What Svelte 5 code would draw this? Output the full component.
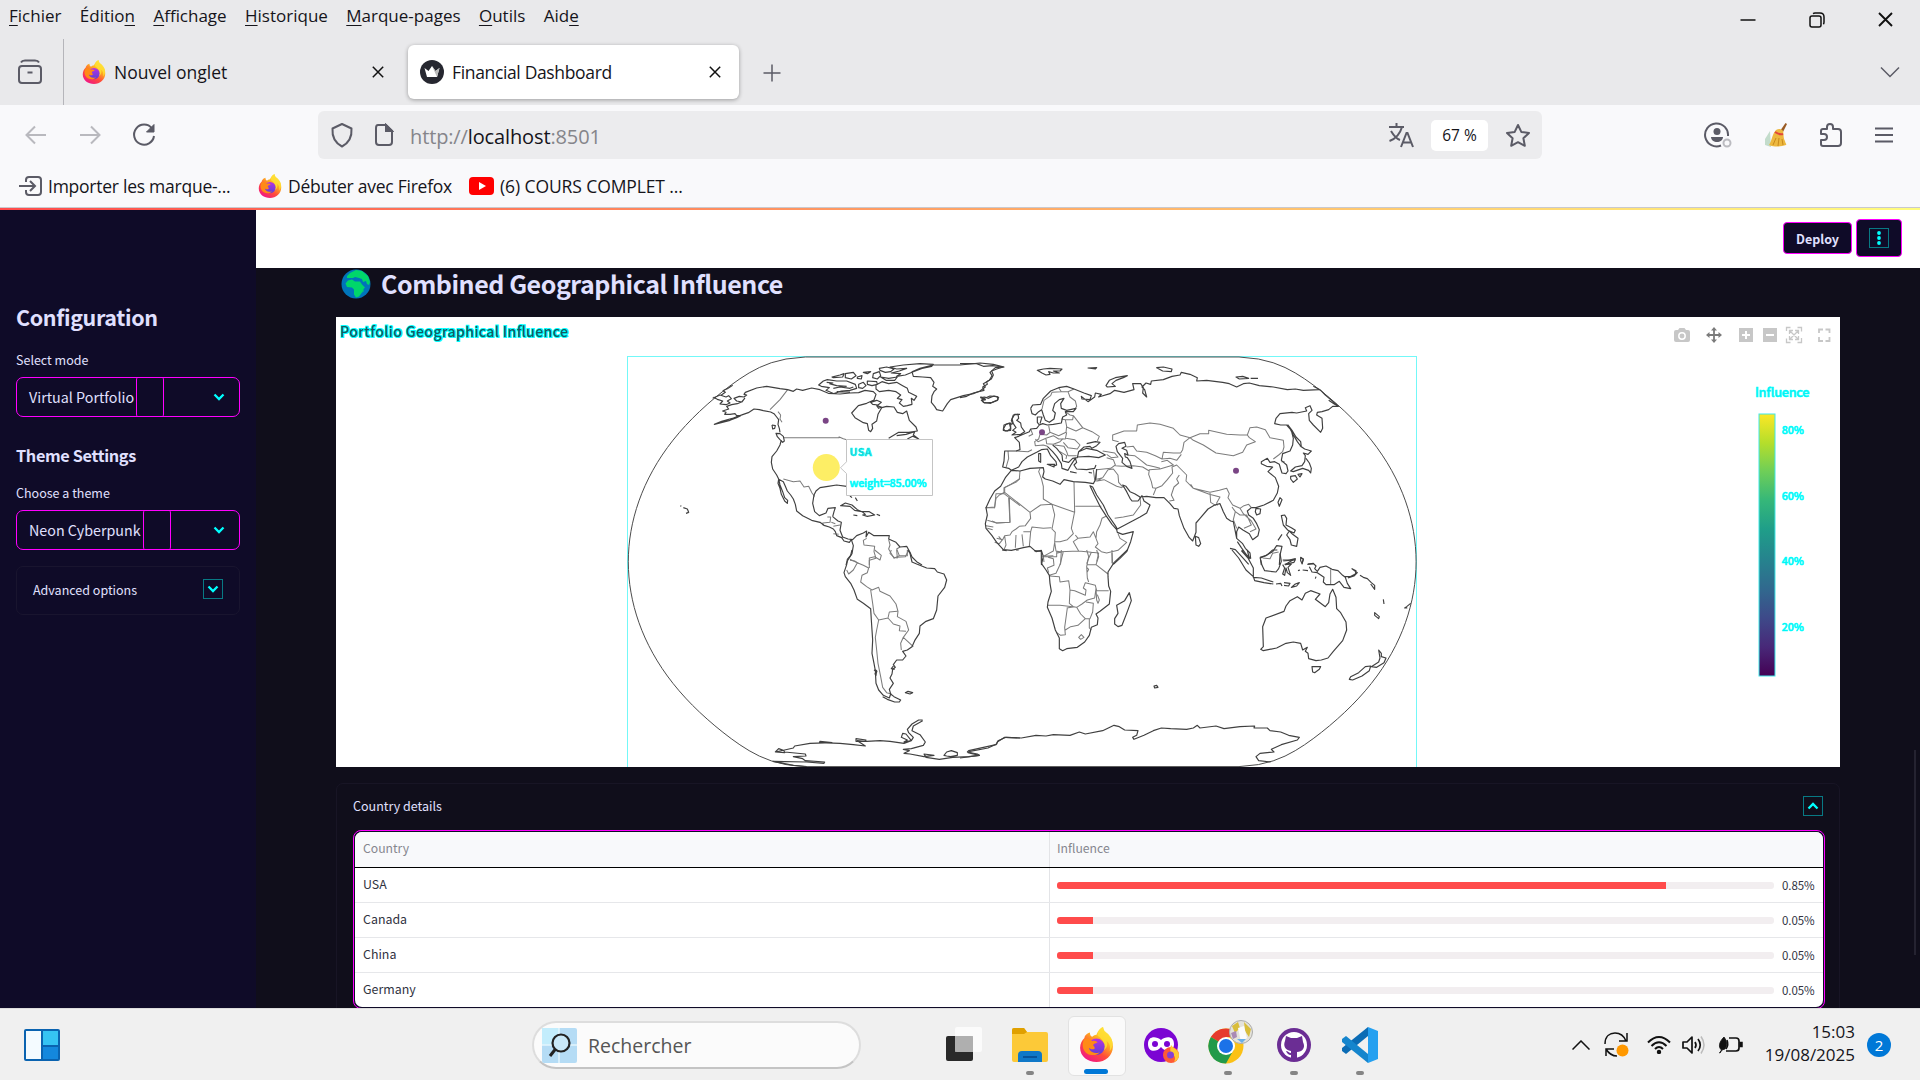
<script>
  const menus = [
    ['', 'F', 'ichier'], ['Éditio', 'n', ''], ['', 'A', 'ffichage'], ['', 'H', 'istorique'],
    ['', 'M', 'arque-pages'], ['', 'O', 'utils'], ['Aid', 'e', '']
  ];
  const rows = [
    { name: 'USA', fill: 85, label: '0.85%' },
    { name: 'Canada', fill: 5, label: '0.05%' },
    { name: 'China', fill: 5, label: '0.05%' },
    { name: 'Germany', fill: 5, label: '0.05%' }
  ];
  const ticks = [[434.3, '80%'], [500, '60%'], [565.3, '40%'], [631, '20%']];

  // Sphere outline in the Natural Earth projection, centred on the plot.
  const project = (lon, lat) => {
    const p2 = lat * lat;
    const p4 = p2 * p2;
    const x = lon * (0.8707 - 0.131979 * p2 + p4 * (-0.013791 + p4 * (0.003971 * p2 - 0.001529 * p4)));
    const y = lat * (1.007226 + p2 * (0.015085 + p4 * (-0.044475 + 0.028874 * p2 - 0.005916 * p4)));
    return `${(1022.2 + 144 * x).toFixed(2)},${(561.8 - 144 * y).toFixed(2)}`;
  };
  const sphere = [];
  for (let d = -90; d <= 90; d += 3) sphere.push(project(-Math.PI, (d * Math.PI) / 180));
  for (let d = 90; d >= -90; d -= 3) sphere.push(project(Math.PI, (d * Math.PI) / 180));
  const outline = sphere.join(' ');

  const coast = {
    northWest: `M338 121L322 131 308 137M278 160L300 150 318 156 326 152 334 161 322 168 330 174 318 179 300 177 308 168 292 163 280 157
      M309 137L316 142 304 150
      M503 134L480 131 440 124 410 129 376 142 372 148 380 150 372 156 358 154 342 160 350 168 366 171 374 160 366 170 352 176 335 179 320 184 326 192 308 198 318 202 314 208 330 208 345 206 350 212 362 212 350 218 330 226 283 238 305 229 340 219 370 208 385 203 402 192 418 194 430 197 452 201 462 206 470 216 476 224 474 238 478 250 480 262
      M456 240L466 242 464 250 458 252 456 240M468 265L480 266 490 274 493 288 488 292 480 284 472 275Z
      M484 285L480 300 470 318 456 335 454 352 458 372 470 390 476 402 480 420 488 440 494 458 503 466 502 475 494 468 484 448 480 430 474 415 476 403 490 410 496 424 502 438 512 450 520 462 526 478 530 498 548 512 575 526 600 532 612 541 628 546 640 552 646 560 650 572 665 578 672 588 688 592 694 584
      M503 134L520 139 530 132 548 136 575 129 600 134 625 145 660 147 690 144 716 143 735 136 760 140 768 148 762 165 740 175 715 182 695 204 705 218 730 233 742 236 746 256 752 260 758 250 756 238 770 228 774 208 785 188 800 184 822 186 832 202 848 206 860 198 868 226 888 246 892 258 866 262 836 262 806 280M830 272L858 268 884 260 880 270 896 282 878 274 862 282
      M596 120L610 108 622 104 650 108 680 108 706 118 710 130 690 136 664 138 642 146 618 136 628 128 604 124ZM628 116L650 122 680 124M640 130L660 126 690 130 700 126M620 112L640 114M650 140L690 141M636 96L660 90 672 86 668 96 640 98ZM676 86L700 82 708 92 694 102 676 98ZM712 96L726 92 724 102 712 100ZM730 82L752 80 742 86ZM716 118L730 112 738 122 728 130 716 128ZM742 108L770 110 772 118 756 122 742 118ZM760 86L778 80 782 92 772 102 758 98ZM778 70L800 66 822 72 812 80 796 82 780 76ZM782 96L806 100 832 96 824 106 798 106ZM810 66L850 60 900 56 940 58 935 64 906 70 880 80 856 90 830 94 842 86 814 84 838 78 860 70 830 72Z
      M768 120L786 110 806 116 830 112 848 122 862 130 866 142 890 154 882 166 874 160 876 178 862 182 850 184 838 174 846 164 832 160 842 150 828 140 806 136 778 140 768 132ZM752 172L770 166 784 172 774 180 758 178ZM770 182L784 186 776 190Z
      M938 60L900 70 876 80 880 94 908 96 932 98 942 112 938 124 950 132 942 140 936 152 934 172 944 184 950 194 968 198 982 176 992 164 1030 152 1060 146 1080 138 1096 126 1090 116 1108 106 1116 92 1110 82 1126 68 1152 66 1120 58 1080 54 1020 60 980 60Z
      M1082 158L1094 156 1104 160 1122 153 1136 157 1132 166 1116 172 1094 174 1084 166 1096 164Z
      M582 450L578 475 584 500 598 512 618 504 624 490 646 488 642 500 638 515M582 450L588 438 600 428 624 424 650 420 680 424M690 453L696 458M706 458L712 468M662 482L676 474 696 480 712 494 726 500 704 496 690 484ZM700 510L712 512M726 500L748 500 764 510 742 514 728 510 736 508ZM770 508L780 512
      M638 515L654 528 664 532 660 556 668 576 684 582 698 584 710 572 730 564 740 558 738 576 746 562 762 572 792 572 808 572 806 582 828 592 840 606 860 604 870 622 876 636 890 650 906 660M694 584L700 602 696 626 682 648 678 660
      M181 482L184 484M190 488L202 492 206 502 198 505M1200 208L1184 208 1174 226 1178 236 1172 238M1168 234L1152 240 1150 256 1162 258 1172 250Z`,
    northEast: `M0 56L50 56 70 64 98 62 130 66 110 72 95 78 100 90 94 102 80 110 82 118 68 126 72 136 40 144 20 154 0 158
      M62 156L74 160 90 153 112 155 114 164 92 175 70 172 66 164 76 164Z
      M232 76L250 72 270 70 306 72 300 78 280 78 298 84 280 84 266 80 270 88 258 90 246 84ZM384 69L410 68 406 72ZM438 122L448 106 466 98 502 92 490 98 468 106 456 116 466 124 442 126ZM590 68L610 66 636 72 634 80 608 78ZM828 96L848 94 866 100 838 102ZM872 100L894 100
      M212 190L216 206 226 210 236 200 245 194 250 210 256 226 268 232 282 222 286 204 278 196 284 176 298 164 312 160 302 176 304 190 320 196 348 190 340 200 316 200 320 210 308 216 304 234 280 238 262 240 248 236 238 240 232 232 232 216 246 216 240 236
      M212 190L218 180 242 178 250 160 272 138 296 128 320 124 342 132 372 144 394 152 390 164 366 162 364 154 384 170 404 156 406 144 424 148 416 156 450 146 464 136 492 142 522 134 518 116 542 116 550 128 548 144 560 156 554 134 546 126 558 114 572 118 574 108 610 104 636 94 660 90 664 82 690 88 712 98 710 108 740 106 788 112 808 116 830 126 850 116 868 114 898 122 940 126 982 134 1006 132 1030 136 1078 134M1060 124L1080 134 1096 150 1136 184 1124 178 1106 166M1134 184L1118 184 1106 194 1086 200 1072 202 1070 210 1086 220 1088 250 1082 262 1060 240 1048 226 1046 206 1056 196 1050 182 1036 188 1040 198 1010 204 996 202 960 206 948 220 944 236 962 240 980 240 994 256 1000 280 998 300 990 318 968 326 964 346 980 360 984 378 978 386 966 384 962 372 958 358 944 350 930 352 922 340 904 350 904 356 920 364 938 366 924 380 946 398 956 424 952 444 940 466 912 480 888 488 874 488
      M888 490L902 492 900 506 890 510 886 500ZM960 458L966 464 958 484 954 472ZM984 240L996 256 1008 276 1022 290 1024 306 1012 290 1000 270ZM1020 302L1034 312 1054 318 1044 328 1030 324 1036 332 1034 350 1026 362 1006 366 992 378 1000 380 1028 370 1046 376 1052 384 1054 370 1048 354 1038 340M992 394L1006 392 1012 402 1000 412 992 402ZM1014 388L1026 386 1020 396Z
      M874 488L862 498 866 510 880 520 890 536 898 554 894 572 878 584 868 566 850 556 836 546 830 560 830 580 848 596 856 610 870 624 872 640 860 630 844 608 832 590M830 580L826 560 820 530 812 528 800 520 790 500 780 476 764 480 744 492 720 520 708 534 708 562 698 588 688 578 672 550 658 512 654 492 642 490 630 476 612 458 588 458 560 454 540 456 524 446 510 440 498 424 488 420 500 440 510 460 516 468 534 468 546 452 552 468 570 480 560 504 540 516 506 534 472 552 466 542 444 510 430 480 410 450 398 426 390 422 402 448 420 484 438 512 456 538 470 554 472 562 488 568 520 560 512 590 500 620 480 640 460 658
      M706 574L716 578 722 596 716 604 708 600ZM810 610L826 614 850 640 866 658M964 512L974 510 980 520 978 540 994 548 1006 556 1002 564 984 556 970 540ZM966 568L954 586M988 558L998 568 1014 580 1010 604 994 600 990 584 980 570ZM900 640L916 632 938 620 950 602 966 604 960 630 958 660M902 645L904 660M970 648L1006 644 1002 652 974 658M1022 638L1030 642 1026 658M1042 658L1062 656
      M156 222L160 210 174 208 176 220 170 226 182 234 184 246 194 260 182 268 156 270 168 262 158 256 168 248 160 236ZM152 234L138 238 130 252 136 258 152 256ZM238 240L230 250 212 252 208 260 190 268 176 274 164 278 178 292 180 314 168 318 134 318 132 348 128 366 146 370 154 376 176 366 186 350 202 336 230 322 244 314 262 312 272 332 288 350 290 360 278 364M262 304L278 320 290 334 304 356 306 370 324 376 334 358 346 340 350 352 342 360 350 372 380 374 404 370 408 360 M236 326L242 326 242 352 236 348ZM262 358L284 358 282 366ZM278 300L290 310 306 330 308 348 326 352 338 340 352 338 356 320 372 306 390 304 396 310 410 302 420 292 406 290 380 296M356 320L380 310 410 316 436 330 416 338 386 334 352 336M330 380L350 384M386 382L396 384
      M476 296L468 304 472 320 488 340 486 352 500 364 516 370 510 350 502 338 496 336 494 326 504 330 500 316 486 310 498 304 494 292Z
      M154 376L180 378 210 370 250 368 252 380 248 396 256 402 278 408 300 418 312 404 340 410 376 412 400 416 406 404 410 372M154 376L136 398 122 424 104 438 90 462 78 488 82 510 76 536 78 550 96 572 110 592 130 614 154 616 190 608 210 604 228 620 244 616 250 634 244 660`,
    southWest: `M696 0L692 16 682 28 680 44 672 68 676 80 692 100 702 120 712 148 730 160 752 176 754 210 756 240 758 270 756 310 762 340 766 362 768 400 776 420 790 436 808 444 812 432 822 440 842 450 838 456 824 456 802 448 788 440
      M764 358L770 362 768 376 764 370M812 432L808 418 820 400 810 384 816 372 818 358 826 352 820 344 830 330 848 330 858 318 848 304 862 300 876 290 884 272 898 250 900 228 918 214 940 206 950 180 954 138 974 112 980 90 972 72 952 66 944 56 920 54 890 42 876 36 870 10 864 0M820 348L814 356 824 358M856 428L864 424 878 428 870 432ZM762 360L772 366
      M908 510L896 510 876 522 862 538 866 548 880 562 874 572 858 552 848 550 844 562 862 570 852 576 874 572 852 580 810 574 780 572 740 574 708 574 708 566 738 570 734 574 712 572 736 588 700 584 660 580 598 578 600 574 636 578 570 580 524 588 520 594 494 600 466 606 476 596 492 602 494 608 466 606M494 606L556 612 558 618 520 620 548 626 556 632 614 636 612 640 560 636 460 634
      M908 512L880 528 876 542 900 554 916 576 910 586 874 596 850 598 868 602 852 610 870 612 912 620 942 616 912 612 918 622 958 628 998 622 1046 620 1078 616 1044 608 1050 604 1104 594 1130 582 1134 572 1158 562 1200 564M972 616L980 606 994 602 1012 608 1012 616 992 620 980 618ZM458 634L490 640 520 646 560 650`,
    southEast: `M244 0L244 40 258 60 268 76 270 100 274 124 264 156 262 172 276 204 286 240 298 264 298 296 308 302 320 296 352 292 374 276 388 256 394 232 412 224 414 204 408 192 420 184 448 162 452 124 446 108 444 80 444 66 462 38 502 0
      M126 0L140 2M168 0L176 0M222 2L246 4M508 128L514 152 500 190 486 226 474 230 464 222 464 206 474 190 470 166 494 152ZM582 408L590 406 594 412 584 414Z
      M816 0L836 24 858 60 880 80 884 92 912 98 940 102M844 2L864 24 880 54 880 82 904 84 940 96M846 0L860 18 868 26 862 0M900 22L906 46 914 62 948 66 956 56 964 34 960 10M900 22L920 16 938 0 952 0
      M948 102L962 100 966 108M972 98L990 100 986 108 972 106M994 112L1006 102 1018 98 1010 108ZM968 30L988 30 1006 26 988 36 976 44 994 42 984 52 992 76 982 68 978 54 974 76 968 72 974 54 968 44M1022 22L1030 28 1026 40 1022 32ZM1014 62L1020 60M1028 60L1044 62M1068 80L1066 86M1044 42L1060 40 1068 48 1064 56 1072 64 1080 52 1098 48 1116 58 1134 62 1148 76 1156 82 1162 100 1172 116 1152 112 1138 94 1122 104 1098 104 1090 96 1092 82 1072 68 1056 66 1048 50M1152 80L1170 80 1186 72 1188 62 1176 56 1192 68 1182 78 1164 84M1200 76L1210 82 1222 86 1234 98 1244 106 1244 118 1232 102M1270 148L1272 162M1244 188L1258 200 1256 206 1244 196ZM1352 160L1340 170 1334 174 1342 174
      M902 298L910 302 950 294 978 280 1000 276 1022 280 1028 300 1042 292 1036 304 1044 310 1046 326 1068 332 1084 330 1104 324 1120 304 1148 272 1160 240 1158 216 1142 188 1130 176 1128 142 1118 118 1110 132 1106 158 1096 170 1066 148 1080 132 1052 122 1036 130 1026 150 1012 140 990 152 978 168 972 184 918 204 908 230 910 290ZM1056 350L1082 350 1078 358 1064 368 1058 366ZM1256 300L1264 310 1264 320 1278 324 1272 338 1250 352 1234 350 1256 336 1260 324ZM1232 348L1228 362 1206 378 1178 390 1168 388 1172 380 1196 368 1216 350Z
      M0 624L58 616 52 612 22 606 26 602 108 584 112 576 134 562 184 564 228 556 258 558 280 554 330 556 358 546 376 552 428 542 462 526 478 530 494 540 534 542 530 556 518 562 522 568 552 556 580 542 604 534 632 536 680 538 700 534 712 526 720 534 768 528 792 536 840 530 884 528 882 534 922 534 930 542 962 546 986 556 1018 562 1012 570 964 584 934 598 942 606 900 610 888 620 896 632 932 636`
  };
  const borders = {
    northWest: `M503 134L480 164 450 194M474 200L482 210 480 222 486 232M492 278L658 278M656 275L670 281 680 284M490 402L520 410 540 408 552 426 566 424 576 444 584 454M622 516L632 516 630 532 608 534 610 542M634 532L646 536M640 544L660 540M640 566L656 568M740 580L730 586 732 600 764 604 762 620 768 640 748 646 748 660M806 584L810 600 806 612 822 640 838 632 830 612 840 606M838 632L862 632 862 614M690 646L704 648 716 656M1152 446L1128 446 1124 488 1096 488M1152 446L1200 482M1168 458L1170 532 1130 534 1102 526M1152 446L1152 428 1190 410 1200 400`,
    northEast: `M296 128L304 140 324 140 342 132M304 140L276 142 272 152 252 166 246 192M324 140L330 156 346 168 350 184 344 194M316 200L330 210 340 212 338 224 316 224 304 222M316 224L320 244 318 262 296 272 270 262 266 242M340 212L354 230 368 248 348 258 320 246M368 248L396 260 418 274 412 288M320 262L316 282 296 282 280 272 258 280 234 290 226 282M212 252L218 268 206 274M270 262L260 270 240 268 236 282 224 290 226 302 250 300 262 304M258 282L260 296 280 298 300 290 310 280M318 280L344 284 360 300 352 312 324 308 310 292M284 300L312 304 320 320 324 332 350 332M300 320L320 332 318 342M144 318L146 340 138 368M168 318L204 320 216 314
      M428 318L464 324 474 336 454 338 440 328M440 338L460 344 466 360 452 370 410 374M476 290L458 286 458 270 492 258 530 258 532 240 570 234 600 238 640 250 660 270 690 278M690 278L672 292 668 314 662 324 640 324 610 322 606 342 586 332 560 322 530 318 520 304 500 306M500 330L524 332 540 344 560 360 586 366 600 370M604 350L622 346 640 360 600 372 568 374 566 388 574 410 578 428 588 430 580 450M588 430L606 422 622 404 638 384 636 366 650 360 680 390 678 408 700 430 750 442 778 436 800 430 808 446 804 458 818 480 840 490 852 482 866 478 874 488M606 342L630 340 650 346 664 328M690 278L720 266 746 266 746 256 800 268 840 270 862 270 868 278 886 290 860 300 848 322 820 332 768 324 730 300 700 286 690 278M862 270L870 248 890 246 916 254 930 278 970 286 972 306 968 320 956 330 940 342M964 350L974 350M628 468L642 466 634 450 642 426 656 414 650 402 658 390M692 418L700 430 748 448 780 456 770 474 772 482M750 444L752 472 768 482M816 486L826 500 820 524 830 550M826 500L840 510 860 510 874 540 852 550M840 490L850 506 874 528 888 552 870 560M400 374L404 404 428 398 444 374 460 372 474 390 476 412 490 428M428 398L412 408 432 404 470 424 486 428M410 374L408 410M466 362L486 364 520 362 548 366 568 378M540 456L542 480 520 510 490 516 464 520
      M180 378L178 402 152 418 134 428 134 442 118 450 108 460 104 486 78 488M134 442L210 502 242 480 276 478 250 462 250 424 244 400 236 380 240 370M146 458L150 532 110 534 96 528M210 502L212 520 196 542 178 544 168 552 156 560 150 570 134 572 128 584 110 580M276 478L344 502 342 410M276 478L284 510 276 552 286 562 284 590 300 590 322 584 340 566 334 550 344 500M346 484L424 484M438 514L426 520 420 540 410 560 408 580 400 560 390 576 354 580 346 570M408 580L414 596 406 606 424 620 440 624 474 616 500 592 480 580 474 566M456 624L458 656M190 560L212 560 216 546 250 550 274 548M212 560L208 604M168 570L166 608M186 568L190 604M134 574L138 600 132 614M284 592L280 618 250 634 M284 592L288 618 300 620 356 618 394 622 386 640 380 656M288 622L310 620 300 660M356 618L340 590 354 580M116 574L126 586 118 596 104 592M246 634L280 632M78 542L100 546M82 550L98 554M394 622L416 624 410 650M104 488L102 488`,
    southWest: `M690 28L712 38 700 60 686 72 680 60M712 38L730 46 746 54 742 68 726 76 722 96 740 110 756 120 776 112 780 124 810 138 828 162 834 184 832 200 858 214 866 240 850 262 880 290M748 54L748 24 764 20 780 30 784 16 764 0M814 0L810 10 822 22 832 24 830 0M832 22L856 20 866 0M752 120L758 160 762 190 776 210 804 204 808 186 832 184M776 210L770 240 766 262 770 300 774 340 782 380 788 412 800 428 814 432M804 204L820 222 840 228 838 242 858 244M850 262L842 280 844 300`,
    southEast: `M250 20L290 20 290 10 304 6M250 20L252 36M264 22L280 26 282 46 262 54 266 68M304 0L302 40 288 70 268 76M268 78L298 80 300 96 326 92 330 120 344 122 376 136 378 120 370 114 376 98 406 106 410 122 446 122M380 0L386 20 380 50 382 84 386 96M380 44L408 44 444 72M408 44L416 20 410 0M456 0L456 40M330 120L328 160 340 170M262 166L300 166 350 172 366 162 382 150 404 144 408 116M408 116L410 150 414 160 418 150 412 134M322 174L314 232 316 254 302 256 290 248M350 172L362 192 376 206 390 206 398 186 400 160 378 156M376 206L354 226 332 230 316 240M388 208L388 234 394 240M356 262L364 254 372 262 362 268ZM1112 58L1112 104M908 24L930 26 938 10 956 6M320 174L344 170M380 52L386 58 382 66`
  };
  const quadrants = [
    ['northWest', 'translate(620 345) scale(.33333)'],
    ['northEast', 'translate(960 345) scale(.33333)'],
    ['southWest', 'translate(620 550) scale(.33333)'],
    ['southEast', 'translate(960 550) scale(.33333)']
  ];
</script>

{#snippet firefox(size)}
  <svg width={size} height={size} viewBox="0 0 32 32">
    <path d="M28 9c-1-2-3-4-5-5 0-2-1-3-1-4-4 2-5 5-6 7-2 0-3 1-4 2-2-1-2-3-2-4C6 6 5 9 5 10 3 12 1 15 1 19c0 8 7 13 15 13s15-6 15-14c0-4-1-7-3-9Z" fill="url(#fx-body)" />
    <path d="M22 0c-4 2-5 5-5 8 3 2 6 5 6 9 0 2-1 4-2 5 4-1 6-6 4-9 3 1 4 5 3 9 3-3 4-9 0-14-2-3-6-4-6-8Z" fill="#ffde32" opacity=".85" />
    <circle cx="16" cy="18" r="7.500" fill="url(#fx-globe)" />
    <path d="M5 11c3-1 5 0 7 2 2-1 4 0 5 1-1 1-4 1-4 3 1 1 2 2 1 3-2 1-4 0-5-1 1 4 5 6 10 4-3 4-12 4-15-3-1-3-1-6 1-9Z" fill="#ff8a16" />
  </svg>
{/snippet}

{#snippet cross(size)}
  <svg width={size} height={size} viewBox="0 0 12 12" class="line dark"><path d="M.8.8l10.400 10.400M11.200.8L.8 11.200" /></svg>
{/snippet}

<svg class="defs" width="0" height="0">
  <defs>
    <linearGradient id="fx-body" x1=".85" y1=".05" x2=".25" y2="1">
      <stop offset="0" stop-color="#fff44f" /><stop offset=".35" stop-color="#ffb01f" />
      <stop offset=".65" stop-color="#ff4b3a" /><stop offset="1" stop-color="#f0138a" />
    </linearGradient>
    <linearGradient id="fx-globe" x1="0" y1="0" x2="0" y2="1">
      <stop offset="0" stop-color="#b833e1" /><stop offset="1" stop-color="#5b3fd6" />
    </linearGradient>
    <linearGradient id="viridis" x1="0" y1="1" x2="0" y2="0">
      <stop offset="0" stop-color="#440154" /><stop offset=".11" stop-color="#482878" /><stop offset=".22" stop-color="#3e4989" />
      <stop offset=".33" stop-color="#31688e" /><stop offset=".44" stop-color="#26828e" /><stop offset=".56" stop-color="#1f9e89" />
      <stop offset=".67" stop-color="#35b779" /><stop offset=".78" stop-color="#6ece58" /><stop offset=".89" stop-color="#b5de2b" />
      <stop offset="1" stop-color="#fde725" />
    </linearGradient>
  </defs>
</svg>

<div class="screen">
  <header class="top">
    <div class="menu-row">
      <nav>{#each menus as [a, key, b]}<span>{a}<u>{key}</u>{b}</span>{/each}</nav>
      <div class="window-controls">
        <svg width="16" height="16" viewBox="0 0 16 16" class="line dark"><path d="M.5 8h15" /></svg>
        <svg width="16" height="16" viewBox="0 0 16 16" class="line dark"><rect x="1" y="4" width="11" height="11" rx="2" /><path d="M4 1.600C5 1 5 1 6 1h5c3 0 4 1 4 4v5c0 1 0 1.500-.6 2.200" /></svg>
        {@render cross(15)}
      </div>
    </div>
    <div class="tab-row">
      <div class="recent">
        <svg width="26" height="26" viewBox="0 0 26 26" class="line grey thick"><path d="M4 3.500C5 1.500 6 1.500 8 1.500h10c2 0 3 0 4 2" /><rect x="2" y="7" width="22" height="17" rx="3" /><path d="M10.500 13.500h5" /></svg>
      </div>
      <div class="tab">{@render firefox(24)}<span class="n1">Nouvel onglet</span>{@render cross(12)}</div>
      <div class="tab active">
        <svg width="24" height="24" viewBox="0 0 24 24"><circle cx="12" cy="12" r="12" fill="#262730" /><path d="M4.500 8l4 3L12 6l3.500 5 4-3L17 17H7Z" fill="#fff" /><path d="M12 6l3.500 5 4-3L17 17Z" fill="#bbb" /></svg>
        <span class="n2">Financial Dashboard</span>{@render cross(12)}
      </div>
      <svg class="plus line grey" width="18" height="18" viewBox="0 0 18 18"><path d="M9 .5v17M.5 9h17" /></svg>
      <svg class="tabs-down line grey" width="20" height="12" viewBox="0 0 20 12"><path d="M1 1.500l9 9 9-9" /></svg>
    </div>
  </header>

  <div class="toolbar">
    <div class="nav-icons">
      <svg width="22" height="20" viewBox="0 0 22 20" class="line faint thick"><path d="M21 10H2M10 1.500L1.500 10l8.500 8.500" /></svg>
      <svg width="22" height="20" viewBox="0 0 22 20" class="line faint thick"><path d="M1 10h19M12 1.500l8.500 8.500-8.500 8.500" /></svg>
      <svg width="24" height="24" viewBox="0 0 24 24" class="line grey thick"><path d="M20 5.500A10 10 0 1 0 22 13" /><path d="M22 1.500V9h-7.500Z" fill="#5b5b66" stroke-width="1" /></svg>
    </div>
    <div class="url-bar">
      <svg width="24" height="26" viewBox="0 0 24 26" class="line grey thick"><path d="M12 2l9.500 4.500c.5 7-2 14-9.500 18C4.500 20.500 2 13.500 2.500 6.500Z" stroke-linejoin="round" /></svg>
      <svg class="page line grey thick" width="20" height="24" viewBox="0 0 20 24"><path d="M4 2h8l6 6v11c0 2-1 3-3 3H5c-2 0-3-1-3-3V5c0-2 1-3 2-3Z" /><path d="M12 2v6h6Z" fill="#5b5b66" /></svg>
      <span class="url">http://<b>localhost</b>:8501</span>
      <svg class="translate line grey thick" width="26" height="25" viewBox="0 0 26 25"><path d="M1 4h15M8.500 0v4M3 8c3 5 6 8 9 9M14 4C12 11 7 16 1.500 18M13 24l5.500-14h1L25 24M15 19.500h8" /></svg>
      <span class="zoom">67 %</span>
      <svg width="26" height="25" viewBox="0 0 26 25" class="line grey thick"><path d="M13 2l3.300 6.900 7.700 1-5.600 5.300 1.400 7.600L13 19.200l-6.800 3.600 1.400-7.600L2 9.900l7.700-1Z" stroke-linejoin="round" /></svg>
    </div>
    <div class="right-icons">
      <svg width="28" height="26" viewBox="0 0 28 26" class="line grey thick"><path d="M17 23.500A11.500 11.500 0 1 1 24 14" /><circle cx="13" cy="9.500" r="3.500" fill="#5b5b66" stroke="none" /><path d="M7 15h12c0 3-3 5-6 5s-6-2-6-5Z" fill="#5b5b66" stroke="none" /><circle cx="23" cy="21" r="3.500" stroke="#bbbbc0" /></svg>
      <svg width="24" height="26" viewBox="0 0 24 26"><path d="M6 9L1 17v6l6 2Z" fill="#c3dccb" /><path d="M21.500 1l1.500 1-4 8-3-1Z" fill="#9a5b24" /><path d="M12 8c3-2 6-1 7 1 1 3 0 7 2 10 0 2 2 3 1 4-5 2-12 2-17 0 3-4 3-11 7-15Z" fill="#edb83f" /><path d="M11 10c3 2 5 3 8 2" stroke="#e2453c" stroke-width="2" fill="none" /><path d="M9 23l3-7M14 24l1-8M19 23l-1-6" stroke="#c98a1c" /></svg>
      <svg width="24" height="26" viewBox="0 0 24 26" class="line grey thick"><path d="M2 11V9c0-2 1-2 2-2h4V5c0-4 6-4 6 0v2h5c2 0 3 1 3 3v11c0 2-1 3-3 3H4c-1 0-2-1-2-2v-4h3c4 0 4-6 0-6H2Z" stroke-linejoin="round" /></svg>
      <svg width="18" height="16" viewBox="0 0 18 16" class="line grey thick"><path d="M0 1.500h18M0 8h18M0 14.500h18" /></svg>
    </div>
  </div>

  <div class="bookmarks">
    <svg width="23" height="20" viewBox="0 0 23 20" class="line grey thick"><path d="M7 6V4c0-2 1-3 3-3h9c2 0 3 1 3 3v12c0 2-1 3-3 3h-9c-2 0-3-1-3-3v-2M0 10h15M11 5l5 5-5 5" /></svg>
    <span class="b1">Importer les marque-...</span>
    {@render firefox(24)}<span class="b2">Débuter avec Firefox</span>
    <svg width="25" height="18" viewBox="0 0 25 18"><rect width="25" height="18" rx="4" fill="#f00" /><path d="M10 5l7 4-7 4Z" fill="#fff" /></svg>
    <span class="b3">(6) COURS COMPLET ...</span>
  </div>
  <div class="rainbow"></div>

  <div class="app">
    <aside>
      <h2>Configuration</h2>
      <div class="label">Select mode</div>
      <div class="select"><span class="value v1">Virtual Portfolio</span><i></i><svg width="12" height="8" viewBox="0 0 12 8"><path d="M1.500 1.500L6 6l4.500-4.500" /></svg></div>
      <h3>Theme Settings</h3>
      <div class="label">Choose a theme</div>
      <div class="select"><span class="value v2">Neon Cyberpunk</span><i></i><svg width="12" height="8" viewBox="0 0 12 8"><path d="M1.500 1.500L6 6l4.500-4.500" /></svg></div>
      <div class="advanced"><span>Advanced options</span><span class="box"><svg width="12" height="8" viewBox="0 0 12 8"><path d="M1.500 1.500L6 6l4.500-4.500" /></svg></span></div>
    </aside>

    <main>
      <div class="app-bar">
        <button class="deploy">Deploy</button>
        <button class="more"><span class="box"><svg width="6" height="14" viewBox="0 0 6 14"><circle cx="3" cy="2" r="1.900" /><circle cx="3" cy="7" r="1.900" /><circle cx="3" cy="12" r="1.900" /></svg></span></button>
      </div>
      <div class="content">
        <h1>
          <svg width="30" height="30" viewBox="0 0 30 30"><circle cx="15" cy="15" r="14.500" fill="#0074ba" /><path d="M6 7l3-3 6-3 6 1 6 5 2 6-1 3-2-1-1-3-3 1-1-3-3-1-4-1-2 1H6Z" fill="#00d66a" /><path d="M4.500 14.500L7 11.500l4-1 3 2 5 0 2 3 3 3-2 2-1 3-3 4-3 1-2-3 0-5-2-2-5-.5Z" fill="#00d66a" /><path d="M21 21l1.500-1v2.500l-1 1Z" fill="#00d66a" /></svg>
          <span>Combined Geographical Influence</span>
        </h1>

        <svg class="chart" width="1504" height="450" viewBox="336 317 1504 450">
          <rect x="627.500" y="356.500" width="789" height="411" fill="none" stroke="#73f8f8" />
          <polygon points={outline} fill="none" stroke="#4c4c4c" />
          {#each quadrants as [key, transform]}
            <g {transform}>
              <path class="border" d={borders[key]} />
              <path class="coast" d={coast[key]} />
            </g>
          {/each}
          <circle cx="826.300" cy="467.500" r="13.500" fill="#fdee65" />
          <g fill="#7a4585"><circle cx="825.700" cy="420.700" r="3" /><circle cx="1042" cy="432.300" r="3" /><circle cx="1236" cy="470.700" r="3" /></g>
          <path d="M846.500 439.500h86v56h-86v-22l-6-5.700 6-6Z" fill="#fff" stroke="#c4c4c4" />
          <text class="neon soft" x="849.500" y="456" textLength="22">USA</text>
          <text class="neon" x="849.500" y="486.700" textLength="77">weight=85.00%</text>
          <text class="neon title" x="340" y="336.700" textLength="228">Portfolio Geographical Influence</text>
          <text class="neon legend" x="1755" y="397" textLength="54.500">Influence</text>
          <rect x="1759" y="414" width="16" height="262" fill="url(#viridis)" stroke="#3fe8e8" />
          {#each ticks as [y, label]}<text class="neon" x="1781.700" {y} textLength="22">{label}</text>{/each}
          <g fill="#c7c7c7">
            <path d="M1674 332q0-2 2-2h2l1.500-2h5l1.500 2h2q2 0 2 2v8q0 2-2 2h-12q-2 0-2-2Z" /><circle cx="1682" cy="336" r="3.200" fill="none" stroke="#fff" stroke-width="1.500" />
            <path d="M1739 328h14v14h-14ZM1763 328h14v14h-14Z" />
            <path d="M1742 335h8M1746 331v8M1766 335h8" stroke="#fff" stroke-width="2" />
            <path d="M1786.500 331v-3.500h4M1797.500 327.500h4v4M1801.500 338v4.500h-4M1790.500 342.500h-4v-4M1790 331l8 8M1798 331l-8 8M1789.500 334v-3.500h3.500M1795 330.500h3.500v3.500M1798.500 336v3.500h-3.500M1793 339.500h-3.500v-3.500" fill="none" stroke="#c7c7c7" stroke-width="1.300" />
            <path d="M1819 333v-3.500h4M1825.500 329.500h4v3.500M1829.500 337v4h-4M1823 341h-4v-4" fill="none" stroke="#c7c7c7" stroke-width="1.800" />
          </g>
          <path d="M1707 335h14M1714 328v14" stroke="#7b7b7b" stroke-width="1.800" /><path d="M1706 335l3.500-3v6ZM1722 335l-3.500-3v6ZM1714 327l-3 3.500h6ZM1714 343l-3-3.500h6Z" fill="#7b7b7b" />
        </svg>

        <section class="details">
          <div class="details-head"><span>Country details</span><span class="box"><svg width="12" height="8" viewBox="0 0 12 8"><path d="M1.500 6.500L6 2l4.500 4.500" /></svg></span></div>
          <div class="table">
            <div class="grid">
              <div class="row head"><span>Country</span><span>Influence</span></div>
              {#each rows as r}
                <div class="row"><span>{r.name}</span><span class="cell"><span class="bar"><span class="fill" style="width:{r.fill}%"></span></span><span class="pct">{r.label}</span></span></div>
              {/each}
            </div>
          </div>
        </section>
      </div>
      <div class="scroll"></div>
    </main>
  </div>

  <footer>
    <svg class="widgets" width="36" height="32" viewBox="0 0 36 32"><rect width="36" height="32" rx="2" fill="#0a63b0" /><rect x="2" y="2" width="15" height="28" fill="#f4fbff" /><rect x="19" y="2" width="15" height="14" fill="#35c3f3" /><rect x="19" y="18" width="15" height="12" fill="#1488dd" /></svg>
    <div class="search">
      <svg width="35" height="35" viewBox="0 0 35 35"><rect width="35" height="35" rx="2" fill="#b5dcf5" /><path d="M0 0h17v17H0Z" fill="#c3edfc" /><path d="M17 0v35M0 17h35" stroke="#e4f5fd" stroke-width="1.500" /><circle cx="19" cy="15" r="8.500" fill="#c8e8f8" stroke="#222" stroke-width="2.200" /><path d="M13.500 21L8 28" stroke="#222" stroke-width="3" /></svg>
      <span>Rechercher</span>
    </div>
    <div class="tasks">
      <div class="task"><svg width="36" height="36" viewBox="0 0 36 36"><rect x="0" y="9" width="27" height="25" rx="2" fill="#292929" /><rect x="9" y="0" width="27" height="25" rx="2" fill="#fff" opacity=".72" /><path d="M9 9h18v16H9Z" fill="#aaa" opacity=".8" /></svg></div>
      <div class="task dot"><svg width="36" height="36" viewBox="0 0 36 36"><path d="M0 3q0-2 2-2h10l3 4h19q2 0 2 2v26q0 2-2 2H2q-2 0-2-2Z" fill="#fcc938" /><path d="M0 7V3q0-2 2-2h10l3 4-3 2Z" fill="#e0a000" /><path d="M6 35V28q0-4 4-4h16q4 0 4 4v7Z" fill="#0f78c8" /><path d="M11 30h14" stroke="#07539a" stroke-width="2" /></svg></div>
      <div class="task current">{@render firefox(35)}</div>
      <div class="task"><svg width="36" height="36" viewBox="0 0 36 36"><circle cx="17" cy="18" r="17" fill="#7b05d3" /><path d="M4 17c0-8 8-8 13-4 5-4 13-4 13 4s-8 9-13 3C12 26 4 25 4 17Z" fill="#fff" /><circle cx="11" cy="17" r="3" fill="#7b05d3" /><circle cx="23" cy="17" r="3" fill="#7b05d3" /><circle cx="27" cy="28" r="8" fill="#ff5a35" /><path d="M27 18c2 3 8 5 8 10 0 4-3 6-5 7 2-4 1-7-3-8-1-3-1-6 0-9Z" fill="#ffca32" /><circle cx="26.500" cy="28" r="3.500" fill="#8540d5" /></svg></div>
      <div class="task dot"><svg class="chrome" width="46" height="46" viewBox="0 0 46 46"><circle cx="18" cy="27" r="17.500" fill="#fbc116" /><path d="M18 27L2.900 18A17.500 17.500 0 0 1 33 18H18Z" fill="#e63b2e" /><path d="M2.900 18A17.500 17.500 0 0 0 18 44.500L25.500 31 18 27Z" fill="#229a4a" /><circle cx="18" cy="27" r="9" fill="#fff" /><circle cx="18" cy="27" r="7" fill="#1b72e8" /><circle cx="33" cy="13" r="11.500" fill="#e4e2da" stroke="#aaa" /><path d="M24 7l6-4 2 6-5 5ZM36 3l7 7-2 8-4-6Z" fill="#d9bd3a" /><path d="M30 9l6-2 3 12-6 4Z" fill="#fbfbfb" /><path d="M23 14l5-2 1 6-4 2Z" fill="#a989b5" /><path d="M29 20h9l-4 4Z" fill="#6ab0e8" /></svg></div>
      <div class="task dot"><svg width="34" height="34" viewBox="0 0 34 34"><circle cx="17" cy="17" r="17" fill="#6b2d94" /><circle cx="17" cy="17" r="13" fill="#fff" /><path d="M9 8l5 2h6l5-2 1 6c3 6-1 10-6 10v6q-3 1-6 0v-3c-3 0-4-2-5-4 2 0 3 2 5 2v-2c-6-1-8-5-6-10Z" fill="#6b2d94" /></svg></div>
      <div class="task dot"><svg width="36" height="36" viewBox="0 0 36 36"><path d="M26 0l10 4v28l-10 4Z" fill="#25a0f0" /><path d="M26 9L4 27 0 24v-3L26 0Z" fill="#0b6cb5" /><path d="M26 27L4 9 0 12v3l26 21Z" fill="#1585cd" /></svg></div>
    </div>
    <div class="tray">
      <svg width="18" height="10" viewBox="0 0 18 10" class="line dark"><path d="M.5 9.500L9 1l8.500 8.500" /></svg>
      <svg class="sync line dark" width="25" height="25" viewBox="0 0 25 25"><path d="M1 12C1 4 6 1 11 1s9 3 11 8M23 1v8h-8M2 24v-7h8M2 17c3 5 7 7 11 7" /><circle cx="18.500" cy="18.500" r="6" fill="#ff9800" stroke="none" /></svg>
      <svg class="wifi line dark thick" width="24" height="18" viewBox="0 0 24 18"><path d="M1 6.500Q12-4.500 23 6.500M4.500 10q7.500-7.500 15 0M8 13q4-4 8 0" /><circle cx="12" cy="16" r="1.200" fill="#111" stroke="#111" /></svg>
      <svg class="sound line dark" width="24" height="20" viewBox="0 0 24 20"><path d="M1 7v6h4l5 5V2L5 7Z" stroke-width="1.700" stroke-linejoin="round" /><path d="M13 7q2 3 0 6M16 4q4.500 6 0 12" stroke-width="1.700" /><path d="M19 1.500q6 8.500 0 17" stroke="#bbb" /></svg>
      <svg class="battery line dark" width="25" height="18" viewBox="0 0 25 18"><path d="M11 2h7q3 0 3 3v7q0 3-3 3H8" stroke-width="1.700" /><path d="M22 6.500v4h2v-4Z" fill="#111" /><path d="M1.500 17l2-3C0 11 1 6 6 1c3 4 4 8 1 12l-3 1-2 3Z" fill="#111" stroke-width=".8" /><path d="M9 4q2 5-1 9" stroke="#111" stroke-width="1.500" /></svg>
      <div class="clock"><span>15:03</span><span class="date">19/08/2025</span></div>
      <span class="badge">2</span>
    </div>
  </footer>
</div>

<style>
  :global(body) { margin: 0; overflow: hidden; }
  * { box-sizing: border-box; }
  .defs { position: absolute; }
  .screen { width: 1920px; height: 1080px; display: flex; flex-direction: column; overflow: hidden; font-family: "Open Sans", "Noto Sans", sans-serif; font-size: 17.500px; color: #15141a; }
  svg { display: block; flex: none; }
  .line { fill: none; stroke-width: 1.5; }
  .thick { stroke-width: 2; }
  .dark { stroke: #111; }
  .grey { stroke: #5b5b66; }
  .faint { stroke: #b9b9be; }
  span { white-space: nowrap; }

  .top { height: 105px; background: #e9e9eb; }
  .menu-row { height: 39px; display: flex; justify-content: space-between; }
  nav { display: flex; gap: 18.400px; padding: 0 0 0 9px; line-height: 32px; font-size: 17px; }
  u { text-underline-offset: 3px; text-decoration-thickness: 1px; }
  .window-controls { display: flex; gap: 53px; padding: 12px 27px 0 0; }
  .tab-row { height: 66px; display: flex; align-items: flex-start; }
  .recent { width: 64px; height: 66px; border-right: 1px solid #b5b5ba; display: flex; align-items: center; padding: 0 0 0 17px; }
  .tab { width: 331px; height: 54px; margin: 6px 0 0 8px; padding: 0 10px; display: flex; align-items: center; gap: 8px; border-radius: 6px; }
  .tab span { flex: 1; }
  .n2 { letter-spacing: -.35px; }
  .tab > :global(svg:last-child) { margin-right: 9px; }
  .tab.active { margin-left: 5px; background: #fff; box-shadow: 0 1px 4px #0005; padding: 0 9px 0 12px; }
  .plus { margin: 25px 0 0 24px; }
  .tabs-down { margin: 27px 20px 0 auto; }

  .toolbar { height: 60px; background: #f9f9fb; display: flex; align-items: center; }
  .nav-icons { width: 318px; padding-left: 25px; display: flex; align-items: center; gap: 31.500px; }
  .url-bar { width: 1224px; height: 48px; background: #ececee; border-radius: 6px; display: flex; align-items: center; padding: 0 11px 0 12px; }
  .page { margin-left: 20px; }
  .url { margin: 2px 0 0 16px; font-size: 20px; color: #85858a; letter-spacing: -.13px; }
  .url b { font-weight: 400; color: #15141a; }
  .translate { margin-left: auto; }
  .zoom { width: 57px; height: 31px; margin: 1px 17px 0; background: #fff; border-radius: 5px; text-align: center; line-height: 31px; font-size: 15.500px; }
  .right-icons { flex: 1; display: flex; align-items: center; justify-content: space-between; padding: 0 27px 0 162px; }

  .bookmarks { height: 42px; background: #f9f9fb; display: flex; align-items: center; padding: 0 0 1px 19px; }
  .b1 { margin: 0 26px 0 6px; width: 184px; letter-spacing: -.25px; }
  .b2 { margin: 0 17px 0 6px; width: 164px; letter-spacing: -.25px; }
  .b3 { margin-left: 6px; letter-spacing: -.1px; }
  .rainbow { height: 3px; border-top: 1px solid #c9c9ce; background: linear-gradient(90deg, #ff4b4b, #fffd80); }

  .app { height: 798px; display: flex; font-family: "Noto Sans CJK JP", "Noto Sans", sans-serif; color: #e0e0ff; background: #100e1b; }
  aside { width: 256px; background: #0f0b28; padding: 94px 16px 0; }
  h1, h2, h3 { margin: 0; font-weight: 600; white-space: nowrap; }
  h2 { font-size: 21.500px; line-height: 26px; letter-spacing: -.35px; }
  .label { font-size: 12.500px; line-height: 20px; }
  h2 + .label { margin-top: 20px; }
  .select { height: 40px; margin-top: 7px; border: 1px solid #f0f; border-radius: 7px; display: flex; align-items: center; font-size: 14.300px; }
  .select .value { padding: 0 0 2px 12px; }
  .v1 { width: 119px; }
  .v2 { width: 126px; }
  .select i { width: 28px; height: 40px; border: solid #f0f; border-width: 0 1px; border-radius: 3px; }
  aside path, .box path { fill: none; stroke: #0ff; stroke-width: 2.300; }
  .select svg { margin: 0 14px 0 auto; }
  h3 { font-size: 16.300px; letter-spacing: -.35px; line-height: 24px; margin-top: 26px; }
  h3 + .label { margin-top: 16px; }
  .advanced { height: 49px; margin-top: 16px; border: 1px solid #19152f; border-radius: 7px; display: flex; align-items: center; justify-content: space-between; padding: 0 16px 3px; font-size: 12.500px; }
  .box { width: 20px; height: 20px; border: 1px solid #087984; display: flex; align-items: center; justify-content: center; }

  main { flex: 1; display: flex; flex-direction: column; position: relative; overflow: hidden; }
  .app-bar { height: 58px; background: #fff; display: flex; justify-content: flex-end; align-items: center; gap: 4px; padding: 0 18px 2px 0; flex: none; }
  button { font: inherit; color: #e0e0ff; background: #0f0b28; border: 1.500px solid #f0f; border-radius: 4px; padding: 0; display: flex; align-items: center; justify-content: center; }
  .deploy { width: 69px; height: 32px; font-size: 12.500px; font-weight: 700; }
  .more { width: 46px; height: 38px; }
  .more circle { fill: #0ff; }
  .content { padding: 0 80px; }
  h1 { height: 49px; display: flex; align-items: flex-start; gap: 10px; padding: 0 0 0 5px; font-size: 25px; line-height: 30px; letter-spacing: -.45px; }
  h1 svg { margin-top: 1px; }
  .chart { background: #fff; }
  .coast { fill: none; stroke: #404040; stroke-width: 3.500; stroke-linejoin: round; }
  .border { fill: none; stroke: #7c7c7c; stroke-width: 3.100; stroke-linejoin: round; }
  .neon { font-size: 10.700px; font-weight: 500; fill: #00eaea; stroke: #0ff; stroke-width: .6; }
  .soft { fill: #3aa; stroke-width: .7; font-weight: 700; }
  .title { font-size: 14.200px; font-weight: 500; fill: #165a62; stroke-width: 2; paint-order: stroke; }
  .legend { font-size: 12.800px; }
  .details { height: 240px; margin-top: 16px; border: 1px solid #181525; border-radius: 7px; padding: 0 14px 0 16px; }
  .details-head { height: 46px; display: flex; align-items: center; justify-content: space-between; font-size: 12.500px; padding: 0 2px 3px 0; }
  .table { height: 179px; border: 1px solid #f0f; border-radius: 8px; background: #0f0b28; padding: 1px; }
  .grid { height: 175px; border-radius: 7px; background: #fff; overflow: hidden; color: #31333f; font-size: 12.400px; }
  .row { height: 35px; display: grid; grid-template-columns: 694px 1fr; border-bottom: 1px solid #e6e7ea; line-height: 32px; }
  .row > span { padding-left: 8px; }
  .row > span + span { border-left: 1px solid #e3e4e7; padding-left: 7px; }
  .head { height: 36px; background: #f8f9fb; color: #85868e; border-bottom: 1px solid #000; line-height: 33px; font-size: 12.200px; }
  .cell { display: flex; align-items: center; }
  .bar { width: 717px; height: 7px; border-radius: 3px; background: #f2eef0; overflow: hidden; margin-right: 8px; }
  .fill { display: block; height: 7px; background: #ff4b4b; }
  .pct { font-size: 11.500px; letter-spacing: -.1px; }
  .scroll { position: absolute; right: 4px; top: 540px; width: 2px; height: 205px; background: #252331; }

  footer { height: 72px; background: #f0f0f0; display: flex; align-items: center; border-top: 1px solid #ddd; }
  .widgets { margin: 0 0 0 24px; }
  .search { width: 329px; height: 48px; margin-left: 472px; margin-top: 1px; border: 2px solid #ddd; border-bottom-color: #c4c4c4; border-radius: 24px; background: #fbfbfb; display: flex; align-items: center; gap: 11px; padding-left: 8px; font-size: 19.500px; color: #555; }
  .tasks { display: flex; margin-left: 70px; height: 100%; align-items: center; }
  .task { width: 66px; height: 58px; display: flex; align-items: center; justify-content: center; position: relative; }
  .chrome { margin: 0 0 5px 6px; }
  .dot::after { content: ""; position: absolute; bottom: -1px; width: 8px; height: 4px; border-radius: 2px; background: #858585; }
  .current::before { content: ""; position: absolute; left: 5px; top: 0; width: 56px; height: 58px; border-radius: 6px; background: #fafafa; border: 1px solid #e2e2e2; }
  .current > :global(svg) { position: relative; }
  .current::after { content: ""; position: absolute; bottom: 0; width: 24px; height: 5px; border-radius: 3px; background: #0078d7; }
  .tray { margin-left: auto; display: flex; align-items: center; padding-right: 29px; }
  .sync { margin-left: 14px; }
  .wifi { margin-left: 18px; }
  .sound { margin-left: 11px; }
  .battery { margin-left: 12px; }
  .clock { width: 100px; display: flex; flex-direction: column; align-items: flex-end; font-size: 17px; line-height: 23px; margin: 0 12px 3px; }
  .badge { width: 24px; height: 24px; border-radius: 50%; background: #0078d7; color: #fff; font-size: 15px; line-height: 24px; text-align: center; }
</style>
